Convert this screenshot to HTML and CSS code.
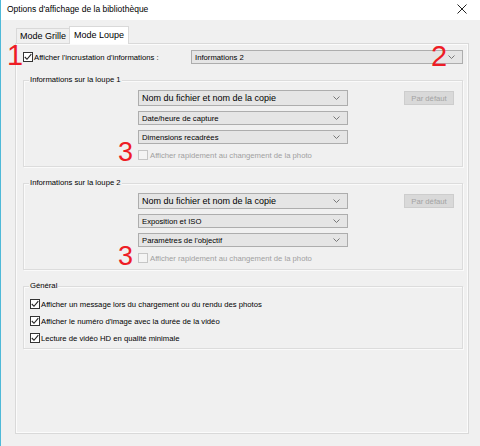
FILE: index.html
```html
<!DOCTYPE html>
<html lang="fr">
<head>
    <meta charset="UTF-8">
    <title>Options d'affichage de la bibliothèque</title>
    <link rel="stylesheet" href="styles.css">
</head>
<body>
    <div class="window">
        <div class="titlebar">
            <span class="title">Options d'affichage de la bibliothèque</span>
            <svg class="close" width="10" height="10" viewBox="0 0 10 10">
                <path d="M0.5 0.5 L9.5 9.5 M9.5 0.5 L0.5 9.5" stroke="#222" stroke-width="1" fill="none"/>
            </svg>
        </div>

        <div class="tabs">
            <div class="tab">Mode Grille</div>
            <div class="tab active">Mode Loupe</div>
        </div>

        <div class="panel">
            <div class="row-top">
                <label class="check">
                    <span class="box"><svg width="8" height="8" viewBox="0 0 8 8"><path d="M0.8 4 L3 6.3 L7.3 1.2" stroke="#222" stroke-width="1.1" fill="none"/></svg></span>
                    Afficher l'incrustation d'informations :
                </label>
                <div class="select wide">
                    <span>Informations 2</span>
                    <svg width="7" height="4" viewBox="0 0 7 4"><path d="M0.5 0.5 L3.5 3.5 L6.5 0.5" stroke="#777" fill="none"/></svg>
                </div>
            </div>

            <!-- Loupe 1 -->
            <div class="group">
                <span class="group-title">Informations sur la loupe 1</span>
                <div class="loupe">
                    <div class="options">
                        <div class="select big">
                            <span>Nom du fichier et nom de la copie</span>
                            <svg width="7" height="4" viewBox="0 0 7 4"><path d="M0.5 0.5 L3.5 3.5 L6.5 0.5" stroke="#777" fill="none"/></svg>
                        </div>
                        <div class="select">
                            <span>Date/heure de capture</span>
                            <svg width="7" height="4" viewBox="0 0 7 4"><path d="M0.5 0.5 L3.5 3.5 L6.5 0.5" stroke="#777" fill="none"/></svg>
                        </div>
                        <div class="select">
                            <span>Dimensions recadrées</span>
                            <svg width="7" height="4" viewBox="0 0 7 4"><path d="M0.5 0.5 L3.5 3.5 L6.5 0.5" stroke="#777" fill="none"/></svg>
                        </div>
                        <label class="check quick">
                            <span class="box disabled"></span>
                            Afficher rapidement au changement de la photo
                        </label>
                    </div>
                    <div class="btn-default">Par défaut</div>
                </div>
            </div>

            <!-- Loupe 2 -->
            <div class="group">
                <span class="group-title">Informations sur la loupe 2</span>
                <div class="loupe">
                    <div class="options">
                        <div class="select big">
                            <span>Nom du fichier et nom de la copie</span>
                            <svg width="7" height="4" viewBox="0 0 7 4"><path d="M0.5 0.5 L3.5 3.5 L6.5 0.5" stroke="#777" fill="none"/></svg>
                        </div>
                        <div class="select">
                            <span>Exposition et ISO</span>
                            <svg width="7" height="4" viewBox="0 0 7 4"><path d="M0.5 0.5 L3.5 3.5 L6.5 0.5" stroke="#777" fill="none"/></svg>
                        </div>
                        <div class="select">
                            <span>Paramètres de l'objectif</span>
                            <svg width="7" height="4" viewBox="0 0 7 4"><path d="M0.5 0.5 L3.5 3.5 L6.5 0.5" stroke="#777" fill="none"/></svg>
                        </div>
                        <label class="check quick">
                            <span class="box disabled"></span>
                            Afficher rapidement au changement de la photo
                        </label>
                    </div>
                    <div class="btn-default">Par défaut</div>
                </div>
            </div>

            <!-- Général -->
            <div class="group">
                <span class="group-title">Général</span>
                <div class="general">
                    <label class="check">
                        <span class="box"><svg width="8" height="8" viewBox="0 0 8 8"><path d="M0.8 4 L3 6.3 L7.3 1.2" stroke="#222" stroke-width="1.1" fill="none"/></svg></span>
                        Afficher un message lors du chargement ou du rendu des photos
                    </label>
                    <label class="check">
                        <span class="box"><svg width="8" height="8" viewBox="0 0 8 8"><path d="M0.8 4 L3 6.3 L7.3 1.2" stroke="#222" stroke-width="1.1" fill="none"/></svg></span>
                        Afficher le numéro d'image avec la durée de la vidéo
                    </label>
                    <label class="check">
                        <span class="box"><svg width="8" height="8" viewBox="0 0 8 8"><path d="M0.8 4 L3 6.3 L7.3 1.2" stroke="#222" stroke-width="1.1" fill="none"/></svg></span>
                        Lecture de vidéo HD en qualité minimale
                    </label>
                </div>
            </div>
        </div>

        <!-- annotation numbers -->
        <span class="mark mark-1">1</span>
        <span class="mark mark-2">2</span>
        <span class="mark mark-3a">3</span>
        <span class="mark mark-3b">3</span>
    </div>
</body>
</html>
```

FILE: styles.css
```css
* {
    box-sizing: border-box;
}
body {
    margin: 0;
    font-family: "Liberation Sans", Arial, sans-serif;
    font-size: 7.7px;
    color: #000;
    background-color: #f0f0f0;
}
.window {
    position: relative;
    width: 480px;
    height: 446px;
    border-left: 1px solid #4fb9d8;
    background-color: #f0f0f0;
    overflow: hidden;
}
.titlebar {
    height: 20px;
    background-color: #fff;
    display: flex;
    align-items: center;
    justify-content: space-between;
    padding: 0 13px 2px 6px;
}
.title {
    font-size: 8.5px;
}
.tabs {
    display: flex;
    align-items: flex-end;
    margin: 6px 0 -1px 15px;
    position: relative;
    z-index: 1;
}
.tab {
    height: 15px;
    margin-bottom: 1px;
    padding: 0 3px;
    border: 1px solid #d9d9d9;
    border-bottom: none;
    font-size: 9px;
    line-height: 14px;
    background-color: #f0f0f0;
}
.tab.active {
    height: 18px;
    margin: 0 0 0 -1px;
    padding: 0 4px;
    background-color: #fff;
    line-height: 16px;
}
.panel {
    margin-left: 14px;
    width: 454px;
    height: 391px;
    border: 1px solid #d9d9d9;
    box-shadow: inset 0 0 0 1px #fbfbfb;
    padding: 6px 5px 0 7px;
}
.row-top {
    display: flex;
    align-items: center;
    height: 14px;
}
.row-top .select {
    margin-left: auto;
    width: 272px;
}
.check {
    display: flex;
    align-items: center;
    gap: 1px;
    white-space: nowrap;
}
.box {
    flex: none;
    width: 10px;
    height: 10px;
    border: 1px solid #333;
    background-color: #fff;
    display: flex;
    align-items: center;
    justify-content: center;
}
.box.disabled {
    border-color: #c6c6c6;
    background-color: #f4f4f4;
}
.select {
    height: 14px;
    background-color: #e5e5e5;
    border: 1px solid #adadad;
    display: flex;
    align-items: center;
    justify-content: space-between;
    padding: 0 7px 0 3px;
}
.select.big {
    height: 16px;
    font-size: 9px;
}
.group {
    position: relative;
    margin-top: 16px;
    border: 1px solid #dcdcdc;
    box-shadow: inset 1px 1px 0 #fafafa, 1px 1px 0 #fafafa;
}
.group-title {
    position: absolute;
    top: -6px;
    left: 5px;
    padding: 0 1px;
    line-height: 10px;
    background-color: #f0f0f0;
}
.loupe {
    display: flex;
    align-items: flex-start;
    gap: 56px;
    padding: 9px 0 6px 114px;
}
.options {
    width: 210px;
    display: flex;
    flex-direction: column;
    gap: 5px;
}
.quick {
    margin-top: 1px;
    gap: 2px;
    color: #a0a0a0;
}
.btn-default {
    width: 50px;
    height: 14px;
    margin-top: 1px;
    background-color: #d9d9d9;
    border: 1px solid #cdcdcd;
    color: #a3a3a3;
    display: flex;
    align-items: center;
    justify-content: center;
}
.general {
    display: flex;
    flex-direction: column;
    gap: 7px;
    padding: 12px 6px 5px;
}
.mark {
    position: absolute;
    color: #ee1c25;
    font-size: 29px;
    line-height: 30px;
}
.mark-1 {
    left: 6px;
    top: 40px;
}
.mark-2 {
    left: 430px;
    top: 41px;
}
.mark-3a,
.mark-3b {
    left: 117px;
    font-size: 27px;
    line-height: 27px;
}
.mark-3a {
    top: 139px;
}
.mark-3b {
    top: 243px;
}
```
